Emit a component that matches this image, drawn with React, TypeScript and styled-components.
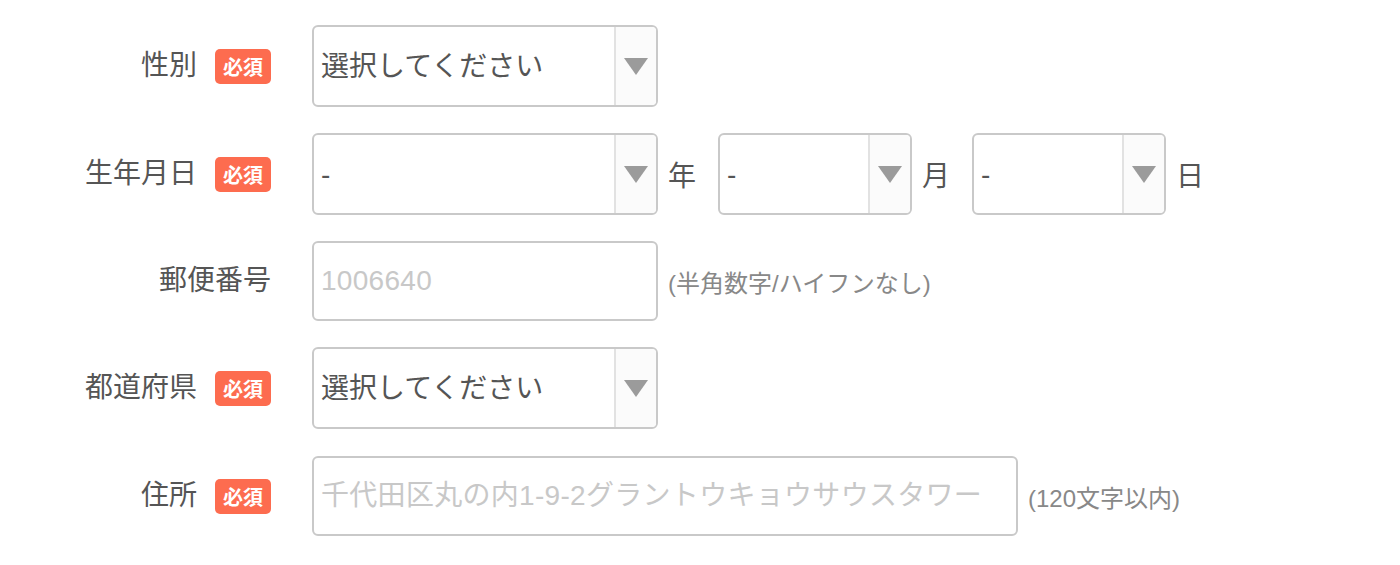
import React from 'react';
import styled, { createGlobalStyle } from 'styled-components';

const GlobalStyle = createGlobalStyle`
  html, body {
    margin: 0;
    padding: 0;
    background: #fff;
  }
  body {
    font-family: "Liberation Sans", "Noto Sans CJK JP", sans-serif;
    color: #555;
  }
`;

const Form = styled.div`
  padding-top: 12px;
`;

const Row = styled.div<{ $height?: number }>`
  display: flex;
  align-items: center;
  height: ${p => p.$height ?? 108}px;
`;

const LabelCell = styled.div`
  width: 271px;
  display: flex;
  justify-content: flex-end;
  align-items: center;
  gap: 18px;
  margin-right: 41px;
`;

const LabelText = styled.span`
  font-size: 28px;
  color: #555;
  line-height: 1;
`;

const Required = styled.span`
  display: inline-flex;
  align-items: center;
  justify-content: center;
  width: 56px;
  height: 35px;
  border-radius: 5px;
  background: #fd6c4f;
  color: #fff;
  font-size: 20px;
  font-weight: bold;
`;

const Fields = styled.div`
  display: flex;
  align-items: center;
`;

const SelectBox = styled.div<{ $width: number }>`
  box-sizing: border-box;
  width: ${p => p.$width}px;
  height: 82px;
  display: flex;
  border: 2px solid #c9c9c9;
  border-radius: 6px;
  overflow: hidden;
  background: #fff;
`;

const NativeSelect = styled.select`
  flex: 1;
  min-width: 0;
  appearance: none;
  border: none;
  outline: none;
  background: transparent;
  padding: 0 0 0 7px;
  font-family: inherit;
  font-size: 28px;
  color: #555;
`;

const ArrowBox = styled.div`
  width: 40px;
  border-left: 2px solid #e2e2e2;
  background: #fbfbfb;
  display: flex;
  align-items: center;
  justify-content: center;
`;

const Arrow = styled.span`
  width: 0;
  height: 0;
  border-left: 12px solid transparent;
  border-right: 12px solid transparent;
  border-top: 17px solid #9b9b9b;
`;

const Suffix = styled.span`
  font-size: 28px;
  color: #555;
  margin: 0 22px 0 10px;
`;

const TextInput = styled.input<{ $width: number }>`
  box-sizing: border-box;
  width: ${p => p.$width}px;
  height: 80px;
  border: 2px solid #c9c9c9;
  border-radius: 6px;
  padding: 0 7px;
  outline: none;
  font-family: inherit;
  font-size: 28px;
  letter-spacing: 0.3px;
  color: #555;

  &::placeholder {
    color: #c8c8c8;
  }
`;

const Hint = styled.span`
  font-size: 24px;
  color: #888;
  margin-left: 10px;
`;

type SelectProps = { width: number; value: string };

const Select: React.FC<SelectProps> = ({ width, value }) => (
  <SelectBox $width={width}>
    <NativeSelect defaultValue={value}>
      <option value={value}>{value}</option>
    </NativeSelect>
    <ArrowBox>
      <Arrow />
    </ArrowBox>
  </SelectBox>
);

const Label: React.FC<{ text: string; required?: boolean }> = ({ text, required }) => (
  <LabelCell>
    <LabelText>{text}</LabelText>
    {required && <Required>必須</Required>}
  </LabelCell>
);

export default function App() {
  return (
    <>
      <GlobalStyle />
      <Form>
        <Row>
          <Label text="性別" required />
          <Fields>
            <Select width={346} value="選択してください" />
          </Fields>
        </Row>
        <Row>
          <Label text="生年月日" required />
          <Fields>
            <Select width={346} value="-" />
            <Suffix>年</Suffix>
            <Select width={194} value="-" />
            <Suffix>月</Suffix>
            <Select width={194} value="-" />
            <Suffix>日</Suffix>
          </Fields>
        </Row>
        <Row $height={106}>
          <Label text="郵便番号" />
          <Fields>
            <TextInput $width={346} placeholder="1006640" />
            <Hint>(半角数字/ハイフンなし)</Hint>
          </Fields>
        </Row>
        <Row>
          <Label text="都道府県" required />
          <Fields>
            <Select width={346} value="選択してください" />
          </Fields>
        </Row>
        <Row>
          <Label text="住所" required />
          <Fields>
            <TextInput $width={706} placeholder="千代田区丸の内1-9-2グラントウキョウサウスタワー" />
            <Hint>(120文字以内)</Hint>
          </Fields>
        </Row>
      </Form>
    </>
  );
}
